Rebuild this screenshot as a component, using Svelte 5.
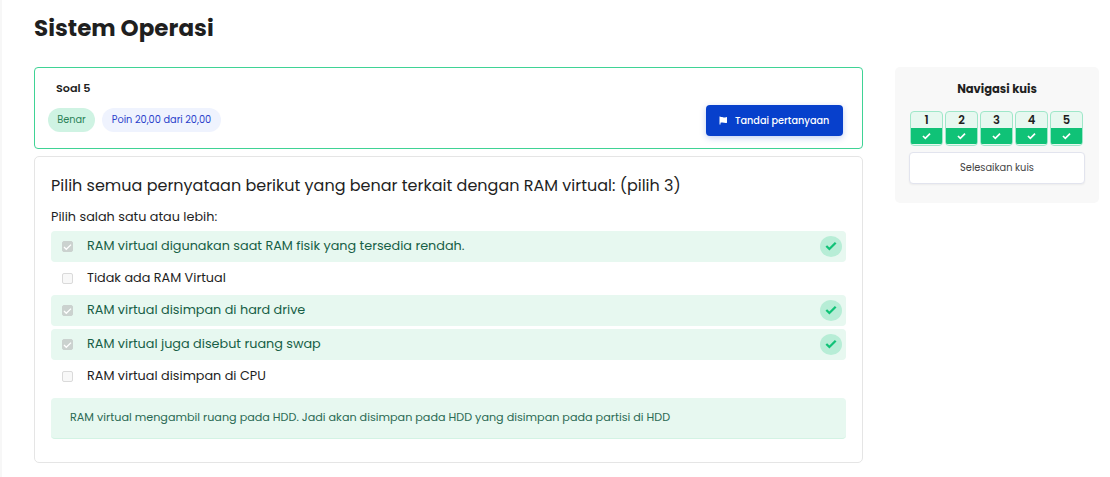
<script>
  const answers = [
    { text: 'RAM virtual digunakan saat RAM fisik yang tersedia rendah.', correct: true },
    { text: 'Tidak ada RAM Virtual', correct: false },
    { text: 'RAM virtual disimpan di hard drive', correct: true },
    { text: 'RAM virtual juga disebut ruang swap', correct: true },
    { text: 'RAM virtual disimpan di CPU', correct: false }
  ];
  const questions = [1, 2, 3, 4, 5];
</script>

{#snippet check()}
  <svg class="check" viewBox="0 0 12 10" aria-hidden="true">
    <path d="M1.3 5 4.4 8 10.700 1.800" />
  </svg>
{/snippet}

<div class="page">
  <h1>Sistem Operasi</h1>
  <div class="columns">
    <main>
      <section class="info">
        <h2>Soal 5</h2>
        <div class="meta">
          <span class="pill state">Benar</span>
          <span class="pill grade">Poin 20,00 dari 20,00</span>
          <button class="flag">
            <svg viewBox="0 0 9 9" aria-hidden="true">
              <path d="M.5.5h1v.6C3.3.5 4.400 1.900 6 1.500L8 1v5.700C6 7.700 4.600 5.900 1.500 6.800V8.500h-1z" />
            </svg>
            <span>Tandai pertanyaan</span>
          </button>
        </div>
      </section>

      <section class="question">
        <p class="prompt">Pilih semua pernyataan berikut yang benar terkait dengan RAM virtual: (pilih 3)</p>
        <p class="hint">Pilih salah satu atau lebih:</p>
        <div class="answers">
          {#each answers as answer}
            <div class="answer" class:correct={answer.correct}>
              <span class="box">
                {#if answer.correct}{@render check()}{/if}
              </span>
              <span class="label">{answer.text}</span>
              {#if answer.correct}
                <span class="badge">{@render check()}</span>
              {/if}
            </div>
          {/each}
        </div>
        <div class="feedback">RAM virtual mengambil ruang pada HDD. Jadi akan disimpan pada HDD yang disimpan pada partisi di HDD</div>
      </section>
    </main>

    <aside>
      <h3>Navigasi kuis</h3>
      <nav>
        {#each questions as number}
          <div class="tile">
            <b>{number}</b>
            <span>{@render check()}</span>
          </div>
        {/each}
      </nav>
      <button class="finish">Selesaikan kuis</button>
    </aside>
  </div>
</div>

<style>
  .page {
    box-sizing: border-box;
    height: 477px;
    overflow: hidden;
    padding: 10px 11px 0 32px;
    border-left: 2px solid #f7f7f7;
    background: #fff;
    color: #1f1f1f;
    font-family: Poppins, Inter, sans-serif;
    font-feature-settings: 'cv11';
  }
  h1, h2, h3, p { margin: 0; white-space: nowrap; }
  button { font: inherit; font-feature-settings: inherit; }
  h1 {
    height: 57px;
    font-size: 23.04px;
    line-height: 36px;
    font-weight: 700;
  }
  .columns { display: flex; align-items: flex-start; gap: 32px; }
  main { width: 829px; }
  .info {
    box-sizing: border-box;
    height: 82px;
    padding: 11px 19px 0 13px;
    border: 1px solid #3fd395;
    border-radius: 4px;
    background: #fff;
  }
  h2 {
    padding-left: 8px;
    font-size: 11.2px;
    line-height: 18px;
    font-weight: 600;
  }
  .meta { display: flex; align-items: flex-start; margin-top: 8px; }
  .pill {
    box-sizing: border-box;
    height: 24px;
    margin-top: 3px;
    border-radius: 12px;
    font-size: 9.75px;
    line-height: 24px;
    text-align: center;
    white-space: nowrap;
  }
  .state { width: 47px; background: #cff3e3; color: #2b8257; }
  .grade { width: 119px; margin-left: 7px; background: #eff3fe; color: #2a3fcb; }
  .flag {
    display: flex;
    align-items: center;
    box-sizing: border-box;
    width: 137px;
    height: 31px;
    margin-left: auto;
    padding: 0 0 0 13px;
    gap: 7px;
    border: 0;
    border-radius: 4px;
    background: #0740cc;
    box-shadow: 0 2px 6px #0740cc40;
    color: #fff;
    font-size: 9.7px;
    font-weight: 500;
    white-space: nowrap;
  }
  .flag svg { width: 9px; height: 9px; fill: #fff; }
  .question {
    box-sizing: border-box;
    height: 307px;
    margin-top: 7px;
    padding: 17px 16px;
    border: 1px solid #e5e5e5;
    border-radius: 5px;
  }
  .prompt { font-size: 16px; line-height: 24px; }
  .hint { margin-top: 9px; font-size: 12.8px; line-height: 20px; }
  .answers { margin-top: 4px; }
  .answer {
    display: flex;
    align-items: center;
    box-sizing: border-box;
    height: 27px;
    padding: 0 4px 0 11px;
    font-size: 12.8px;
    margin: 3px 0;
  }
  .answer.correct {
    height: 31px;
    border-radius: 4px;
    background: #e7f8f0;
    color: #185f47;
  }
  .label {
    margin-left: 14px;
    padding-bottom: 2px;
    line-height: 20px;
    white-space: nowrap;
  }
  .box {
    display: flex;
    align-items: center;
    justify-content: center;
    box-sizing: border-box;
    flex: none;
    width: 11px;
    height: 11px;
    border: 1px solid #dadada;
    border-radius: 2px;
    background: #f8f8f8;
  }
  .correct .box { border-color: #cbd2cf; background: #cbd2cf; }
  .check {
    flex: none;
    width: 9px;
    height: 8px;
    fill: none;
    stroke: #fff;
    stroke-width: 2.3;
  }
  .box .check { stroke-width: 1.7; }
  .badge {
    display: flex;
    align-items: center;
    justify-content: center;
    width: 22px;
    height: 21px;
    margin-left: auto;
    border-radius: 50%;
    background: #b7edd6;
  }
  .badge .check { width: 12px; height: 10px; margin-bottom: 2px; stroke: #10c277; }
  .feedback {
    box-sizing: border-box;
    height: 41px;
    margin-top: 8px;
    padding: 0 19px 1px;
    border-bottom: 1px solid #d3f3e4;
    border-radius: 4px;
    background: #e7f8f0;
    color: #2b6a54;
    font-size: 11.2px;
    line-height: 39px;
    white-space: nowrap;
  }
  aside {
    box-sizing: border-box;
    width: 204px;
    height: 136px;
    padding: 13px 14px;
    border-radius: 5px;
    background: #f8f8f8;
  }
  h3 {
    font-size: 11.52px;
    line-height: 18px;
    font-weight: 700;
    text-align: center;
  }
  nav { display: flex; gap: 2px; margin: 13px 0 6px 1px; }
  .tile {
    box-sizing: border-box;
    width: 33px;
    height: 35px;
    padding-bottom: 1px;
    border: 1px solid #9fe7c9;
    border-radius: 4px;
    background: #e7f8f0;
    overflow: hidden;
  }
  .tile b {
    display: block;
    height: 16px;
    font-size: 11.52px;
    line-height: 17px;
    font-weight: 600;
    text-align: center;
  }
  .tile span {
    display: flex;
    align-items: center;
    justify-content: center;
    height: 16px;
    background: #10c277;
  }
  .finish {
    display: block;
    box-sizing: border-box;
    width: 176px;
    height: 32px;
    padding: 0;
    border: 1px solid #e2e4ee;
    border-radius: 4px;
    background: #fff;
    box-shadow: 0 1px 2px #0000000d;
    color: #444;
    font-size: 9.8px;
  }
</style>
